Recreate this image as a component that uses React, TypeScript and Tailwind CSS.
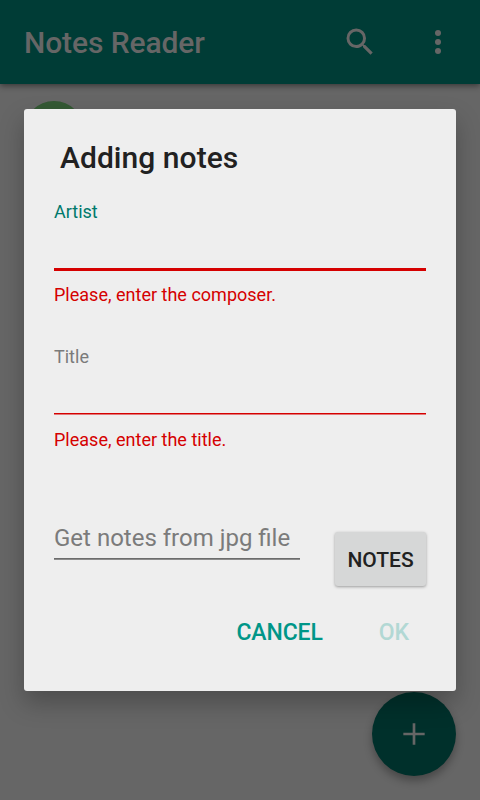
import type { ReactNode } from "react";

function Field({ label, labelClass, line, error }: { label: string; labelClass: string; line: ReactNode; error: string }) {
  return (
    <div className="h-[145px] text-[18px] leading-[21px]">
      <label className={`block ${labelClass}`}>{label}</label>
      <div className="flex h-[49px] flex-col justify-end">{line}</div>
      <p className="mt-[13px] tracking-[0.01px] text-[#d50000]">{error}</p>
    </div>
  );
}

export default function App() {
  return (
    <div className="relative h-[800px] w-[480px] overflow-hidden bg-[#666666] font-['Roboto',sans-serif]">
      <header className="relative flex h-[84px] items-center bg-[#003c36] pl-6 shadow-[0_2px_6px_rgba(0,0,0,0.45)]">
        <h1 className="flex-1 pt-[2px] text-[30px] leading-[36px] font-medium tracking-[-0.1px] text-[#666666]">Notes Reader</h1>
        <svg className="mr-[42px] h-9 w-9" viewBox="0 0 24 24" fill="#666666">
          <path d="M15.5 14h-.79l-.28-.27A6.471 6.471 0 0 0 16 9.5 6.5 6.5 0 1 0 9.5 16c1.61 0 3.09-.59 4.23-1.57l.27.28v.79l5 4.99L20.49 19l-4.99-5zm-6 0C7.01 14 5 11.99 5 9.5S7.01 5 9.5 5 14 7.01 14 9.5 11.99 14 9.5 14z" />
        </svg>
        <svg className="mr-6 h-9 w-9" viewBox="0 0 24 24" fill="#666666">
          <circle cx="12" cy="6" r="2" />
          <circle cx="12" cy="12" r="2" />
          <circle cx="12" cy="18" r="2" />
        </svg>
      </header>
      <div className="mt-[17px] ml-6 h-[60px] w-[60px] rounded-full bg-[#345934]" />

      <button className="absolute right-6 bottom-6 flex h-[84px] w-[84px] items-center justify-center rounded-full bg-[#00302b] shadow-[0_5px_9px_rgba(0,0,0,0.3)]">
        <svg className="h-8 w-8" viewBox="0 0 24 24" fill="#666666">
          <path d="M20 13h-7v7h-2v-7H4v-2h7V4h2v7h7v2z" />
        </svg>
      </button>

      <section className="absolute top-[109px] left-6 h-[582px] w-[432px] rounded-[3px] bg-[#eeeeee] px-[30px] pt-[31px] shadow-[0_12px_24px_rgba(0,0,0,0.25)]">
        <h2 className="h-[61px] pl-[6px] text-[30px] leading-[36px] font-medium tracking-[0.05px] text-[#212121]">Adding notes</h2>
        <Field
          label="Artist"
          labelClass="text-[#00796b]"
          line={<div className="h-[3px] bg-[#d50000]" />}
          error="Please, enter the composer."
        />
        <Field
          label="Title"
          labelClass="text-[#7b7b7b]"
          line={
            <>
              <div className="h-px bg-[#d50000]" />
              <div className="mb-px h-px bg-[#e27777]" />
            </>
          }
          error="Please, enter the title."
        />
        <div className="mt-[23px] flex h-[73px] justify-between">
          <div className="w-[246px] pt-[10px] text-[24px] leading-[28px] whitespace-nowrap text-[#7b7b7b]">
            Get notes from jpg file
            <div className="mt-[6px] h-px bg-[#6c6c6c]" />
            <div className="h-px bg-[#8c8c8c]" />
          </div>
          <button className="mt-[18px] h-[54px] w-[91px] rounded-[3px] bg-[#d6d7d7] pt-[3px] text-[21px] font-medium text-[#212121] shadow-[0_1px_3px_rgba(0,0,0,0.35)]">
            NOTES
          </button>
        </div>
        <div className="mt-[32px] flex justify-end pr-[17px] text-[23px] leading-[28px] font-medium tracking-[-0.1px]">
          <button className="mr-[56px] text-[#009688]">CANCEL</button>
          <button className="text-[#b2d8d4]">OK</button>
        </div>
      </section>
    </div>
  );
}
